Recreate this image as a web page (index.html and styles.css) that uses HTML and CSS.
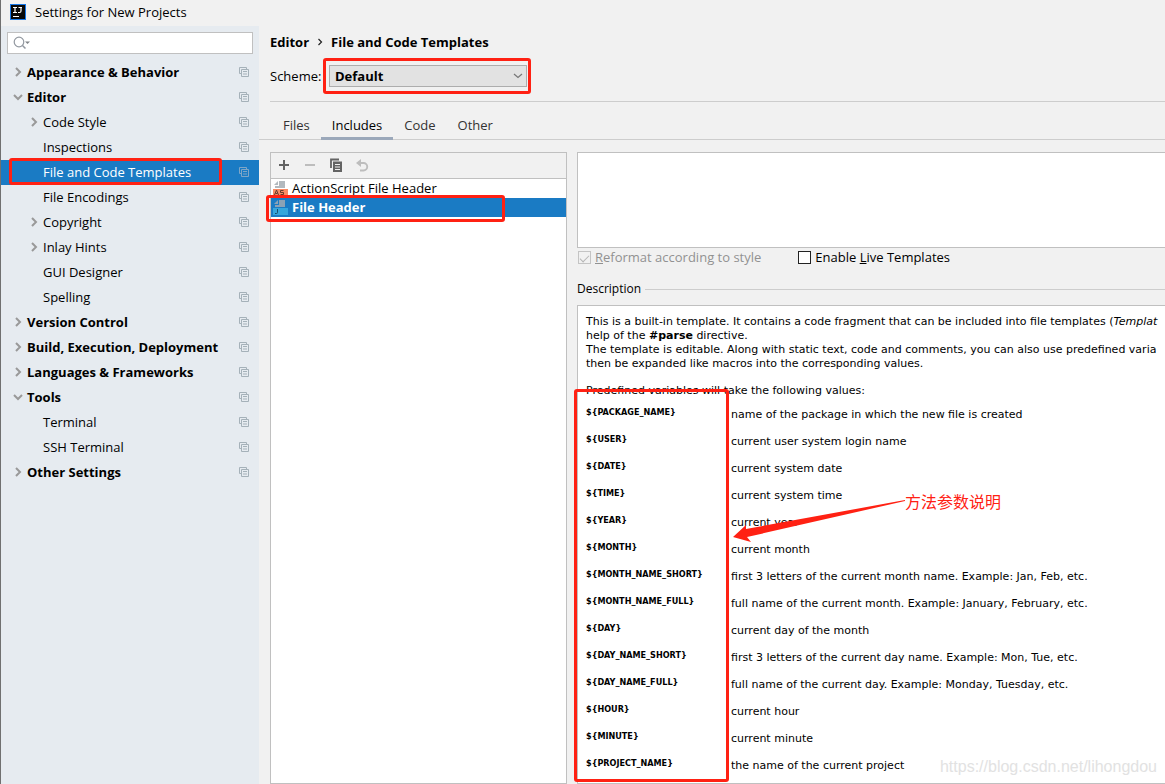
FILE: index.html
```html
<!DOCTYPE html>
<html lang="en">
<head>
<meta charset="utf-8">
<title>Settings for New Projects</title>
<link rel="stylesheet" href="styles.css">
</head>
<body>
<svg class="defs" aria-hidden="true">
  <symbol id="copy" viewBox="0 0 10 10"><path d="M2.500 6.500H.5V.5h7v2M2.500 2.500h7v7h-7zM4 4.500h4M4 7h4" fill="none" stroke="currentColor"/></symbol>
  <symbol id="right" viewBox="0 0 10 10"><path d="M3 1l4 4-4 4" fill="none" stroke="currentColor" stroke-width="2"/></symbol>
  <symbol id="down" viewBox="0 0 10 10"><path d="M1 3l4 4 4-4" fill="none" stroke="currentColor" stroke-width="2"/></symbol>
</svg>
<header class="titlebar">
  <svg class="logo" viewBox="0 0 16 16" aria-hidden="true"><rect width="16" height="16" fill="#1677e8"/><rect x="1" y="1" width="14" height="14" fill="#080808"/><path d="M3 3.500h4M5 3.500v5M3 8.500h4M8.500 3.500H12M11 3.500v3.500q0 1.500-1.500 1.500H8M3 12.500h6" fill="none" stroke="#fff" stroke-width="1.200"/></svg>
  <span>Settings for New Projects</span>
</header>
<div class="window">
  <aside class="sidebar">
    <label class="search">
      <svg viewBox="0 0 18 14" aria-hidden="true"><circle cx="6" cy="6" r="4.800" fill="none" stroke="#9298a0" stroke-width="1.200"/><path d="M9.500 9.500l3 3" stroke="#9298a0" stroke-width="1.500"/><path d="M12 5.500h5l-2.500 2.500z" fill="#808488"/></svg>
      <input type="text" aria-label="Search settings">
    </label>
    <nav class="tree" aria-label="Settings">
      <button class="node group"><svg class="chev"><use href="#right"/></svg><span>Appearance &amp; Behavior</span><svg class="copy"><use href="#copy"/></svg></button>
      <button class="node group"><svg class="chev"><use href="#down"/></svg><span>Editor</span><svg class="copy"><use href="#copy"/></svg></button>
      <button class="node child"><svg class="chev"><use href="#right"/></svg><span>Code Style</span><svg class="copy"><use href="#copy"/></svg></button>
      <button class="node child"><i class="chev"></i><span>Inspections</span><svg class="copy"><use href="#copy"/></svg></button>
      <button class="node child selected"><i class="chev"></i><span>File and Code Templates</span><svg class="copy"><use href="#copy"/></svg><i class="mark mark-node"></i></button>
      <button class="node child"><i class="chev"></i><span>File Encodings</span><svg class="copy"><use href="#copy"/></svg></button>
      <button class="node child"><svg class="chev"><use href="#right"/></svg><span>Copyright</span><svg class="copy"><use href="#copy"/></svg></button>
      <button class="node child"><svg class="chev"><use href="#right"/></svg><span>Inlay Hints</span><svg class="copy"><use href="#copy"/></svg></button>
      <button class="node child"><i class="chev"></i><span>GUI Designer</span><svg class="copy"><use href="#copy"/></svg></button>
      <button class="node child"><i class="chev"></i><span>Spelling</span><svg class="copy"><use href="#copy"/></svg></button>
      <button class="node group"><svg class="chev"><use href="#right"/></svg><span>Version Control</span><svg class="copy"><use href="#copy"/></svg></button>
      <button class="node group"><svg class="chev"><use href="#right"/></svg><span>Build, Execution, Deployment</span><svg class="copy"><use href="#copy"/></svg></button>
      <button class="node group"><svg class="chev"><use href="#right"/></svg><span>Languages &amp; Frameworks</span><svg class="copy"><use href="#copy"/></svg></button>
      <button class="node group"><svg class="chev"><use href="#down"/></svg><span>Tools</span><svg class="copy"><use href="#copy"/></svg></button>
      <button class="node child"><i class="chev"></i><span>Terminal</span><svg class="copy"><use href="#copy"/></svg></button>
      <button class="node child"><i class="chev"></i><span>SSH Terminal</span><svg class="copy"><use href="#copy"/></svg></button>
      <button class="node group"><svg class="chev"><use href="#right"/></svg><span>Other Settings</span><svg class="copy"><use href="#copy"/></svg></button>
    </nav>
  </aside>
  <main class="content">
    <div class="head">
      <h1 class="crumbs"><span>Editor</span><svg viewBox="0 0 6 8" aria-hidden="true"><path d="M1.500 1l3 3-3 3" fill="none" stroke="#222" stroke-width="1.200"/></svg><span>File and Code Templates</span></h1>
      <div class="scheme">
        <label for="scheme">Scheme:</label>
        <div class="combo">
          <select id="scheme"><option>Default</option></select>
          <svg viewBox="0 0 10 6" aria-hidden="true"><path d="M1 1l4 3.500L9 1" fill="none" stroke="#777" stroke-width="1.200"/></svg>
          <i class="mark mark-combo"></i>
        </div>
      </div>
    </div>
    <div class="tabs" role="tablist">
      <button role="tab">Files</button>
      <button role="tab" class="active" aria-selected="true">Includes</button>
      <button role="tab">Code</button>
      <button role="tab">Other</button>
    </div>
    <div class="panes">
      <section class="templates">
        <div class="toolbar">
          <button aria-label="Add"><svg viewBox="0 0 14 14"><path d="M7 2v10M2 7h10" stroke="#636363" stroke-width="2"/></svg></button>
          <button aria-label="Remove"><svg viewBox="0 0 14 14"><path d="M2 7h10" stroke="#bdbdbd" stroke-width="2"/></svg></button>
          <button aria-label="Copy"><svg viewBox="0 0 14 14"><path d="M2 10V1.500h8" fill="none" stroke="#636363" stroke-width="1.800"/><path d="M4 3.500h9V14H4z" fill="#636363"/><path d="M6 6.500h5M6 9h5M6 11.500h5" stroke="#f1f1f1"/></svg></button>
          <button aria-label="Reset"><svg viewBox="0 0 14 14"><path d="M3 5h5.500a3.700 3.700 0 0 1 0 7.500H5" fill="none" stroke="#bdbdbd" stroke-width="1.900"/><path d="M1 5l5-4v8z" fill="#bdbdbd"/></svg></button>
        </div>
        <ul class="files">
          <li><svg viewBox="0 0 15 15" aria-hidden="true"><path d="M6 0h6v7H2V5h4z" fill="#b2b9be"/><path d="M5 0v4H1z" fill="#b2b9be"/><rect y="8" width="15" height="7" fill="#f98b64"/><path d="M1.500 14l2-5 2 5M2.500 12.500h2M10.500 9.500h-3v2h3v2h-3" fill="none" stroke="#673c2d"/></svg><span>ActionScript File Header</span></li>
          <li class="selected"><svg viewBox="0 0 15 15" aria-hidden="true"><path d="M6 0h6v7H2V5h4z" fill="#8ba2b5"/><path d="M5 0v4H1z" fill="#8ba2b5"/><rect y="8" width="15" height="7" fill="#36a6dc"/><path d="M4.500 9v3.500q0 1-1 1H2" fill="none" stroke="#174e6a"/></svg><span>File Header</span><i class="mark mark-file"></i></li>
        </ul>
      </section>
      <section class="detail">
        <textarea class="editor" aria-label="Template text"></textarea>
        <div class="options">
          <label class="off"><input type="checkbox" checked disabled><span><u>R</u>eformat according to style</span></label>
          <label><input type="checkbox"><span>Enable <u>L</u>ive Templates</span></label>
        </div>
        <h2 class="legend">Description</h2>
        <div class="desc">
          <div class="text">
            <p>This is a built-in template. It contains a code fragment that can be included into file templates (<i>Templat</i><br>help of the <b>#parse</b> directive.<br>The template is editable. Along with static text, code and comments, you can also use predefined varia<br>then be expanded like macros into the corresponding values.</p>
            <p>Predefined variables will take the following values:</p>
            <table>
              <tr><th>${PACKAGE_NAME}</th><td>name of the package in which the new file is created</td></tr>
              <tr><th>${USER}</th><td>current user system login name</td></tr>
              <tr><th>${DATE}</th><td>current system date</td></tr>
              <tr><th>${TIME}</th><td>current system time</td></tr>
              <tr><th>${YEAR}</th><td>current year</td></tr>
              <tr><th>${MONTH}</th><td>current month</td></tr>
              <tr><th>${MONTH_NAME_SHORT}</th><td>first 3 letters of the current month name. Example: Jan, Feb, etc.</td></tr>
              <tr><th>${MONTH_NAME_FULL}</th><td>full name of the current month. Example: January, February, etc.</td></tr>
              <tr><th>${DAY}</th><td>current day of the month</td></tr>
              <tr><th>${DAY_NAME_SHORT}</th><td>first 3 letters of the current day name. Example: Mon, Tue, etc.</td></tr>
              <tr><th>${DAY_NAME_FULL}</th><td>full name of the current day. Example: Monday, Tuesday, etc.</td></tr>
              <tr><th>${HOUR}</th><td>current hour</td></tr>
              <tr><th>${MINUTE}</th><td>current minute</td></tr>
              <tr><th>${PROJECT_NAME}</th><td>the name of the current project</td></tr>
            </table>
          </div>
          <i class="mark mark-vars"></i>
          <svg class="arrow" viewBox="0 0 174 44" aria-hidden="true"><path d="M1 38L14 26l0 4L173 1v1L15 38l4 5z" fill="#ff2113"/></svg>
          <span class="note" lang="zh">方法参数说明</span>
          <span class="watermark">https://blog.csdn.net/lihongdou</span>
        </div>
      </section>
    </div>
  </main>
</div>
</body>
</html>
```
FILE: styles.css
```css
* { box-sizing: border-box; }
body {
  margin: 0;
  min-height: 100vh;
  display: flex;
  flex-direction: column;
  background: #f1f1f1;
  border-left: 1px solid #707070;
  color: #000;
  font: 13px/18px "Open Sans", "Noto Sans", sans-serif;
  overflow: hidden;
}
button, select, input, textarea { font: inherit; color: inherit; }
button { border: 0; background: none; padding: 0; text-align: left; }
.defs { display: none; }
.titlebar { display: flex; align-items: center; gap: 9px; height: 26px; padding: 0 9px 2px; }
.logo { width: 16px; height: 16px; }
.window { flex: 1; display: grid; grid-template-columns: 258px minmax(0, 1fr); }

.sidebar { background: #e6ebf0; padding-top: 6px; }
.search {
  display: flex; align-items: center; height: 22px;
  margin: 0 6px 6px; padding-left: 5px;
  background: #fff; border: 1px solid #c0c0c0;
}
.search svg { width: 18px; height: 14px; flex: none; }
.search input { flex: 1; min-width: 0; border: 0; outline: 0; background: none; }
.tree { display: flex; flex-direction: column; }
.node {
  position: relative; display: flex; align-items: center; gap: 4px;
  height: 25px; padding: 0 10px 2px 12px; white-space: nowrap;
}
.node.child { padding-left: 28px; }
.node.group { font-weight: bold; }
.chev { width: 10px; height: 10px; flex: none; color: #999; }
.copy { width: 10px; height: 10px; margin-left: auto; flex: none; color: #a5b1b9; }
.node.selected { background: #1a7bc4; color: #fff; }
.node.selected .copy { color: #7fa6c6; }

.mark { position: absolute; border: 3px solid #ff2113; border-radius: 3px; pointer-events: none; z-index: 2; }
.mark-node { inset: -2px 37px 0 8px; }
.mark-combo { inset: -7px -4px -7px -6px; }
.mark-file { inset: -3px 61px -5px -5px; }
.mark-vars { left: -4px; top: 83px; bottom: 1px; width: 155px; }

.content { display: flex; flex-direction: column; min-width: 0; }
.head { margin-left: 11px; padding: 7px 0 14px; border-bottom: 1px solid #cdcdcd; }
.crumbs { display: flex; align-items: center; gap: 8px; margin: 0 0 14px; font-size: 13px; line-height: 18px; }
.crumbs svg { width: 6px; height: 8px; }
.scheme { display: flex; align-items: center; }
.scheme label { width: 59px; }
.combo { position: relative; width: 198px; }
.combo select {
  display: block; width: 100%; height: 22px; padding: 0 5px;
  appearance: none; background: #e2e2e2; border: 1px solid #adadad; border-radius: 0;
  font-weight: bold; line-height: 18px;
}
.combo svg { position: absolute; right: 4px; top: 8px; width: 10px; height: 6px; }

.tabs { display: flex; height: 38px; padding-left: 13px; border-bottom: 1px solid #cdcdcd; }
.tabs button { margin-top: 10px; padding: 0 11px 3px; height: 28px; color: #333; }
.tabs .active { color: #000; border-bottom: 3px solid #9ba8ba; padding-bottom: 0; }

.panes { flex: 1; display: grid; grid-template-columns: 297px minmax(0, 1fr); gap: 10px; padding: 12px 0 0 11px; }
.templates { display: flex; flex-direction: column; border: 1px solid #c0c0c0; background: #fff; }
.toolbar { display: flex; align-items: center; gap: 12px; height: 26px; padding: 0 6px 2px; background: #f1f1f1; border-bottom: 1px solid #c0c0c0; }
.toolbar button, .toolbar svg { display: block; width: 14px; height: 14px; }
.files { margin: 0; padding: 0; list-style: none; }
.files li { position: relative; display: flex; align-items: center; gap: 4px; height: 19px; padding: 0 2px 1px; }
.files svg { width: 15px; height: 15px; }
.files .selected { background: #1a7bc4; color: #fff; font-weight: bold; }

.detail { display: flex; flex-direction: column; min-width: 0; }
.editor { display: block; width: 100%; height: 96px; resize: none; background: #fff; border: 1px solid #c0c0c0; border-right: 0; outline: 0; border-radius: 0; }
.options { display: flex; gap: 37px; padding: 0 0 0 1px; }
.options label { display: flex; align-items: center; gap: 4px; white-space: nowrap; }
.options input { appearance: none; width: 13px; height: 13px; margin: 0; border: 1px solid #222; background: #fff; display: grid; place-items: center; }
.options .off { color: #919191; }
.options .off input { border-color: #c4c4c4; background: none; }
.options .off input::after { content: ""; width: 8px; height: 4px; border: solid #b5b5b5; border-width: 0 0 1px 1px; transform: rotate(-45deg); }
.legend { display: flex; align-items: center; gap: 4px; margin: 14px 0 7px; font-size: 12px; font-weight: normal; line-height: 18px; }
.legend::after { content: ""; flex: 1; height: 1px; background: #cdcdcd; }
.desc { position: relative; flex: 1; background: #fff; border: 1px solid #c0c0c0; border-right: 0; font: 11px/14px Verdana, "DejaVu Sans", sans-serif; white-space: nowrap; }
.text { overflow: hidden; padding: 9px 0 0 8px; }
.text p { margin: 0 0 13px; }
.text p + p { margin-bottom: 4px; }
table { border-collapse: collapse; }
tr { height: 27px; }
th, td { padding: 6px 0 0; vertical-align: top; text-align: left; }
th { width: 145px; padding-top: 3px; font: bold 9px/14px "DejaVu Sans Condensed", "DejaVu Sans", sans-serif; }
.arrow { position: absolute; left: 154px; top: 193px; width: 174px; height: 44px; }
.note { position: absolute; left: 327px; top: 183px; color: #ff2113; font: 16px/24px "Noto Sans CJK SC", sans-serif; }
.watermark { position: absolute; right: 8px; bottom: 6px; color: #e2e2e2; font: 16px/20px "Liberation Sans", Arial, sans-serif; }
```
